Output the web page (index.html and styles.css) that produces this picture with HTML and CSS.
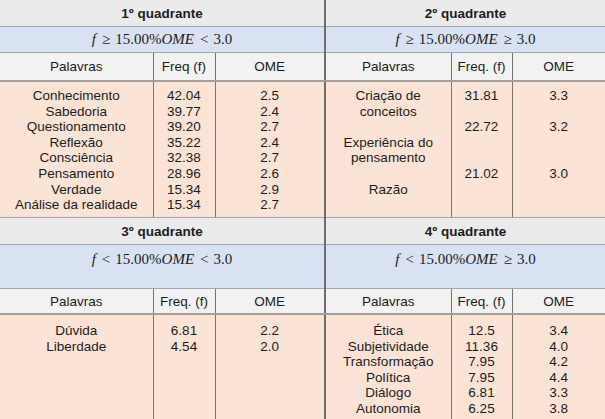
FILE: index.html
```html
<!DOCTYPE html>
<html lang="pt">
<head>
<meta charset="utf-8">
<title>Quadrantes</title>
<link rel="stylesheet" href="styles.css">
</head>
<body>
<table class="quad">
  <colgroup>
    <col class="c1"><col class="c2"><col class="c3">
    <col class="c4"><col class="c5"><col class="c6">
  </colgroup>
  <tr class="title">
    <th colspan="3" class="left">1º quadrante</th>
    <th colspan="3">2º quadrante</th>
  </tr>
  <tr class="formula">
    <td colspan="3" class="left"><span class="m"><i>f</i><span class="op">≥</span>15.00%<i>OME</i><span class="op">&lt;</span>3.0</span></td>
    <td colspan="3"><span class="m"><i>f</i><span class="op">≥</span>15.00%<i>OME</i><span class="op">≥</span>3.0</span></td>
  </tr>
  <tr class="head">
    <td>Palavras</td><td>Freq (f)</td><td class="left">OME</td>
    <td>Palavras</td><td>Freq. (f)</td><td>OME</td>
  </tr>
  <tr class="data top">
    <td>Conhecimento<br>Sabedoria<br>Questionamento<br>Reflexão<br>Consciência<br>Pensamento<br>Verdade<br>Análise da realidade</td>
    <td>42.04<br>39.77<br>39.20<br>35.22<br>32.38<br>28.96<br>15.34<br>15.34</td>
    <td class="left">2.5<br>2.4<br>2.7<br>2.4<br>2.7<br>2.6<br>2.9<br>2.7</td>
    <td>Criação de<br>conceitos<br><br>Experiência do<br>pensamento<br><br>Razão</td>
    <td>31.81<br><br>22.72<br><br><br>21.02</td>
    <td>3.3<br><br>3.2<br><br><br>3.0</td>
  </tr>
  <tr class="title">
    <th colspan="3" class="left">3º quadrante</th>
    <th colspan="3">4º quadrante</th>
  </tr>
  <tr class="formula tall">
    <td colspan="3" class="left"><span class="m"><i>f</i><span class="op">&lt;</span>15.00%<i>OME</i><span class="op">&lt;</span>3.0</span></td>
    <td colspan="3"><span class="m"><i>f</i><span class="op">&lt;</span>15.00%<i>OME</i><span class="op">≥</span>3.0</span></td>
  </tr>
  <tr class="head short">
    <td>Palavras</td><td>Freq. (f)</td><td class="left">OME</td>
    <td>Palavras</td><td>Freq. (f)</td><td>OME</td>
  </tr>
  <tr class="data bottom">
    <td>Dúvida<br>Liberdade</td>
    <td>6.81<br>4.54</td>
    <td class="left">2.2<br>2.0</td>
    <td>Ética<br>Subjetividade<br>Transformação<br>Política<br>Diálogo<br>Autonomia</td>
    <td>12.5<br>11.36<br>7.95<br>7.95<br>6.81<br>6.25</td>
    <td>3.4<br>4.0<br>4.2<br>4.4<br>3.3<br>3.8</td>
  </tr>
</table>
</body>
</html>
```

FILE: styles.css
```css
html, body {
  margin: 0;
  padding: 0;
  background: #fbe4d6;
}

.quad {
  width: 605px;
  table-layout: fixed;
  border-collapse: collapse;
  font-family: "Liberation Sans", Arial, sans-serif;
  font-size: 13.5px;
  color: #1c1c1c;
}

.c1 { width: 153px; }
.c2 { width: 62px; }
.c3 { width: 110px; }
.c4 { width: 126px; }
.c5 { width: 61px; }
.c6 { width: 93px; }

.quad th,
.quad td {
  padding: 0;
  text-align: center;
  border-top: 1px solid #a3a6ad;
  border-bottom: 1px solid #a3a6ad;
}

.quad .left {
  border-right: 2px solid #6e6e6e;
}

.title th {
  height: 26px;
  background: #ebebeb;
  font-weight: bold;
  vertical-align: middle;
}

.quad tr:first-child th {
  border-top: none;
}

.formula td {
  height: 25px;
  background: #d9e2f3;
  vertical-align: middle;
}

.formula.tall td {
  height: 37px;
  vertical-align: top;
  padding-top: 6px;
}

.m {
  font-family: "Liberation Serif", "Times New Roman", serif;
  font-size: 15px;
  color: #1c1c1c;
}

.m i {
  font-style: italic;
  margin-right: 1px;
}

.op {
  margin: 0 5px;
}

.head td {
  height: 27px;
  background: #f2f2f2;
  vertical-align: middle;
  border-bottom: 2px solid #a39e9b;
}

.head.short td {
  height: 24px;
}

.head td:not(.left):not(:last-child),
.data td:not(.left):not(:last-child) {
  border-right: 1px solid #7d716b;
}

.data td {
  background: #fbe4d6;
  vertical-align: top;
  line-height: 15.6px;
}

.data.top td {
  height: 129px;
  padding-top: 6px;
}

.data.bottom td {
  height: 98px;
  padding-top: 8px;
  border-bottom: none;
}
```
